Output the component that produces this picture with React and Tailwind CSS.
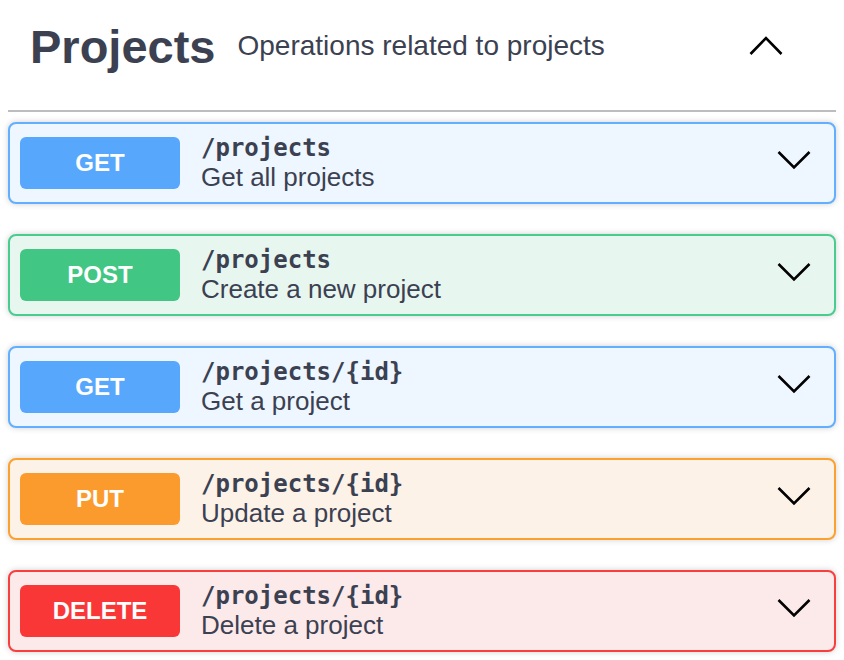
import React from "react";

const ops = [
  {
    method: "GET",
    path: "/projects",
    summary: "Get all projects",
    box: "border-[#61affe] bg-[#eef6ff]",
    badge: "bg-[#57a7fd]",
  },
  {
    method: "POST",
    path: "/projects",
    summary: "Create a new project",
    box: "border-[#49cc90] bg-[#e8f6f0]",
    badge: "bg-[#41c684]",
  },
  {
    method: "GET",
    path: "/projects/{id}",
    summary: "Get a project",
    box: "border-[#61affe] bg-[#eef6ff]",
    badge: "bg-[#57a7fd]",
  },
  {
    method: "PUT",
    path: "/projects/{id}",
    summary: "Update a project",
    box: "border-[#fca130] bg-[#fdf2e8]",
    badge: "bg-[#fc9b2d]",
  },
  {
    method: "DELETE",
    path: "/projects/{id}",
    summary: "Delete a project",
    box: "border-[#f93e3e] bg-[#fce9ea]",
    badge: "bg-[#fa3737]",
  },
];

const ChevronDown = () => (
  <svg width="34" height="34" viewBox="0 0 34 34" fill="none">
    <path d="M1.5 6 L17 21.5 L32.5 6" stroke="#000" strokeWidth="2.6" />
  </svg>
);

const ChevronUp = () => (
  <svg width="34" height="20" viewBox="0 0 34 20" fill="none">
    <path d="M1.5 18 L17 2 L32.5 18" stroke="#000" strokeWidth="2.6" />
  </svg>
);

const Operation = ({ method, path, summary, box, badge }) => (
  <div
    className={`flex items-center h-[82px] border-2 rounded-lg px-[10px] shadow-[0_0_6px_rgba(0,0,0,0.19)] ${box}`}
  >
    <div
      className={`w-[160px] h-[52px] rounded-md flex items-center justify-center text-white font-bold text-[24px] ${badge}`}
    >
      {method}
    </div>
    <div className="flex flex-col ml-[21px] text-[#3b4151]">
      <span className="font-['DejaVu_Sans_Mono',monospace] font-bold text-[24px] leading-[28px]">
        {path}
      </span>
      <span className="text-[26px] leading-[30px]">{summary}</span>
    </div>
    <div className="ml-auto mr-[13px] flex items-center">
      <ChevronDown />
    </div>
  </div>
);

export default function App() {
  return (
    <div className="px-2 bg-white min-h-screen font-['Liberation_Sans',Arial,sans-serif]">
      <div className="flex items-center h-[112px] pb-[18px] border-b-2 border-[#bdbdc1] pl-[22px] text-[#3b4151]">
        <h3 className="text-[47px] font-bold leading-none">Projects</h3>
        <span className="ml-[22px] text-[28px] leading-none">
          Operations related to projects
        </span>
        <div className="ml-auto mr-[53px] flex items-center">
          <ChevronUp />
        </div>
      </div>
      <div className="flex flex-col gap-[30px] pt-[10px]">
        {ops.map((op, i) => (
          <Operation key={i} {...op} />
        ))}
      </div>
    </div>
  );
}
